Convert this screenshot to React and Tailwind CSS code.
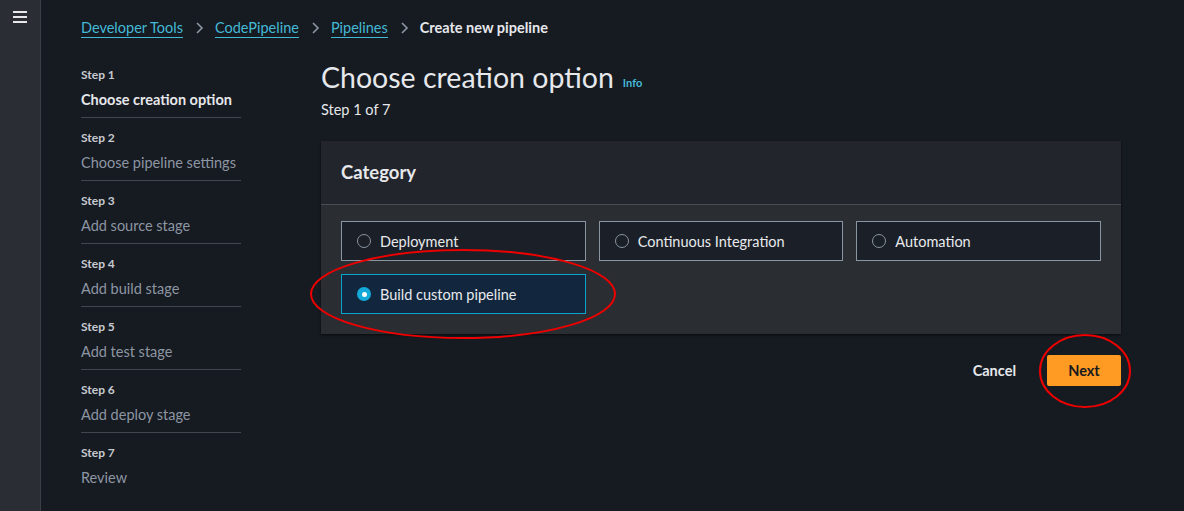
import React from "react";

const steps = [
  ["Step 1", "Choose creation option", true],
  ["Step 2", "Choose pipeline settings"],
  ["Step 3", "Add source stage"],
  ["Step 4", "Add build stage"],
  ["Step 5", "Add test stage"],
  ["Step 6", "Add deploy stage"],
  ["Step 7", "Review"],
];

function Chevron() {
  return (
    <svg width="16" height="16" viewBox="0 0 16 16" className="mx-[8px]">
      <path d="M6 3l5 5-5 5" fill="none" stroke="#8d96a3" strokeWidth="1.6" />
    </svg>
  );
}

function Option({ label, selected }) {
  return (
    <div
      className={
        "flex items-center h-[40px] px-[15px] border " +
        (selected ? "bg-[#12273d] border-[#0aa3cf]" : "bg-[#1b1f27] border-[#8a95a2]")
      }
    >
      {selected ? (
        <span className="w-[14px] h-[14px] rounded-full bg-[#13a9d9] flex items-center justify-center">
          <span className="w-[5px] h-[5px] rounded-full bg-white" />
        </span>
      ) : (
        <span className="w-[14px] h-[14px] rounded-full border border-[#8a95a2]" />
      )}
      <span className="ml-[9px] text-[14.5px] leading-[20px] pt-[2px] text-[#e8eaed]">{label}</span>
    </div>
  );
}

export default function App() {
  return (
    <div
      className="relative w-[1184px] h-[511px] bg-[#161a21] flex overflow-hidden"
      style={{ fontFamily: "Lato, 'Open Sans', sans-serif" }}
    >
      <div className="w-[41px] h-full bg-[#2a2e34] border-r border-[#3a3f47] flex justify-center pt-[11px]">
        <div className="flex flex-col gap-[3px]">
          <span className="block w-[14px] h-[2px] bg-[#e6e8eb]" />
          <span className="block w-[14px] h-[2px] bg-[#e6e8eb]" />
          <span className="block w-[14px] h-[2px] bg-[#e6e8eb]" />
        </div>
      </div>

      <div className="flex-1 pl-[40px] pt-[18px]">
        <div className="flex items-center text-[14.5px] h-[20px]">
          <span className="text-[#44b9d6] border-b border-[#44b9d6] leading-[18px]">Developer Tools</span>
          <Chevron />
          <span className="text-[#44b9d6] border-b border-[#44b9d6] leading-[18px]">CodePipeline</span>
          <Chevron />
          <span className="text-[#44b9d6] border-b border-[#44b9d6] leading-[18px]">Pipelines</span>
          <Chevron />
          <span className="text-[#e6e8eb] font-bold">Create new pipeline</span>
        </div>

        <div className="flex mt-[21px]">
          <div className="w-[160px] flex flex-col -mt-[4px]">
            {steps.map(([s, t, active], i) => (
              <div key={s} className={"h-[63px] pt-[12px] " + (i < 6 ? "border-b border-[#414750]" : "")}>
                <div className="text-[12px] leading-[16px] text-[#c6cad0] font-bold">{s}</div>
                <div
                  className={
                    "text-[14.5px] leading-[20px] mt-[7px] " +
                    (active ? "text-[#e6e8eb] font-bold" : "text-[#8d96a3]")
                  }
                >
                  {t}
                </div>
              </div>
            ))}
          </div>

          <div className="ml-[80px] w-[800px]">
            <div className="flex items-end">
              <h1 className="text-[28.5px] leading-[36px] text-[#e6e8eb]">Choose creation option</h1>
              <span className="ml-[9px] mb-[4px] text-[11px] font-bold text-[#44b9d6]">Info</span>
            </div>
            <div className="text-[14.5px] text-[#e6e8eb] mt-[5px] leading-[20px]">Step 1 of 7</div>

            <div className="mt-[21px] bg-[#2a2d32] shadow-[0_1px_2px_rgba(0,0,0,0.6)]">
              <div className="h-[64px] bg-[#22252b] border-b border-[#474c55] flex items-center px-[20px]">
                <span className="text-[18.5px] font-bold text-[#e6e8eb]">Category</span>
              </div>
              <div className="px-[20px] pt-[16px] pb-[20px] grid grid-cols-3 gap-x-[13px] gap-y-[13px]">
                <Option label="Deployment" />
                <Option label="Continuous Integration" />
                <Option label="Automation" />
                <Option label="Build custom pipeline" selected />
              </div>
            </div>

            <div className="flex justify-end items-center mt-[21px]">
              <span className="text-[14.5px] font-bold text-[#e6e8eb] mr-[31px]">Cancel</span>
              <span className="h-[31px] w-[74px] bg-[#ff9a22] rounded-[2px] flex items-center justify-center text-[14.5px] font-bold text-[#16191f]">
                Next
              </span>
            </div>
          </div>
        </div>
      </div>

      <svg className="absolute left-0 top-0 pointer-events-none" width="1184" height="511">
        <ellipse cx="463" cy="294" rx="152" ry="44" fill="none" stroke="#e00" strokeWidth="2" />
        <ellipse cx="1085" cy="371" rx="45" ry="36" fill="none" stroke="#e00" strokeWidth="2" />
      </svg>
    </div>
  );
}
